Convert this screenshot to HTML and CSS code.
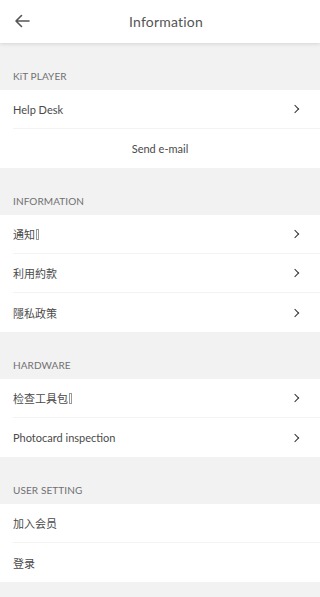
FILE: index.html
```html
<!DOCTYPE html>
<html lang="en">
<head>
<meta charset="utf-8">
<title>Information</title>
<link rel="stylesheet" href="styles.css">
</head>
<body>
<header class="topbar">
  <button class="back" aria-label="Back">
    <svg width="16" height="14" viewBox="0 0 16 14"><path d="M15 7H2M7.5 1.5L2 7l5.5 5.5" fill="none" stroke="#555" stroke-width="1.6" stroke-linecap="round" stroke-linejoin="round"/></svg>
  </button>
  <h1 class="title">Information</h1>
</header>
<main>
  <section class="group">
    <div class="group-title">KiT PLAYER</div>
    <ul class="list">
      <li class="row"><span>Help Desk</span><i class="chev"></i></li>
      <li class="row center"><span>Send e-mail</span></li>
    </ul>
  </section>
  <section class="group">
    <div class="group-title">INFORMATION</div>
    <ul class="list">
      <li class="row"><span>通知<b class="tofu"></b></span><i class="chev"></i></li>
      <li class="row"><span>利用約款</span><i class="chev"></i></li>
      <li class="row"><span>隱私政策</span><i class="chev"></i></li>
    </ul>
  </section>
  <section class="group">
    <div class="group-title">HARDWARE</div>
    <ul class="list">
      <li class="row"><span>检查工具包<b class="tofu"></b></span><i class="chev"></i></li>
      <li class="row"><span>Photocard inspection</span><i class="chev"></i></li>
    </ul>
  </section>
  <section class="group">
    <div class="group-title">USER SETTING</div>
    <ul class="list">
      <li class="row"><span>加入会员</span></li>
      <li class="row"><span>登录</span></li>
    </ul>
  </section>
</main>
</body>
</html>
```
FILE: styles.css
```css
* { box-sizing: border-box; }
html, body { margin: 0; padding: 0; }
body {
  background: #f2f2f2;
  font-family: Lato, "Open Sans", "Noto Sans CJK SC", sans-serif;
  color: #4a4a4a;
  width: 320px;
  min-height: 597px;
}
.topbar {
  position: relative;
  height: 43px;
  background: #fff;
  display: flex;
  align-items: center;
  justify-content: center;
  padding-left: 12px;
  box-shadow: 0 1px 4px rgba(0,0,0,0.12);
  z-index: 1;
}
.back {
  position: absolute;
  left: 14px;
  top: 14px;
  padding: 0;
  border: 0;
  background: none;
  display: flex;
}
.title {
  margin: 0;
  font-size: 14px;
  font-weight: 400;
  color: #555;
  letter-spacing: 0.2px;
}
.group-title {
  height: 47px;
  display: flex;
  align-items: flex-end;
  padding: 0 13px 8px;
  font-size: 10px;
  color: #707070;
  letter-spacing: 0.1px;
}
.list {
  list-style: none;
  margin: 0;
  padding: 0 0 0 13px;
  background: #fff;
}
.row {
  height: 39px;
  display: flex;
  align-items: center;
  justify-content: space-between;
  padding-right: 20px;
  font-size: 11px;
  color: #4a4a4a;
  border-bottom: 1px solid #f3f3f3;
  font-family: Lato, "Noto Sans CJK SC", sans-serif;
}
.row:last-child { border-bottom: 0; }
.row.center { justify-content: center; padding-right: 13px; }
.chev {
  width: 6px;
  height: 6px;
  border-top: 1.6px solid #333;
  border-right: 1.6px solid #333;
  transform: rotate(45deg);
  margin-right: 2px;
}
.tofu {
  display: inline-block;
  width: 3px;
  height: 11px;
  border: 1px solid #999;
  vertical-align: -1px;
  margin-left: 1px;
}
```
